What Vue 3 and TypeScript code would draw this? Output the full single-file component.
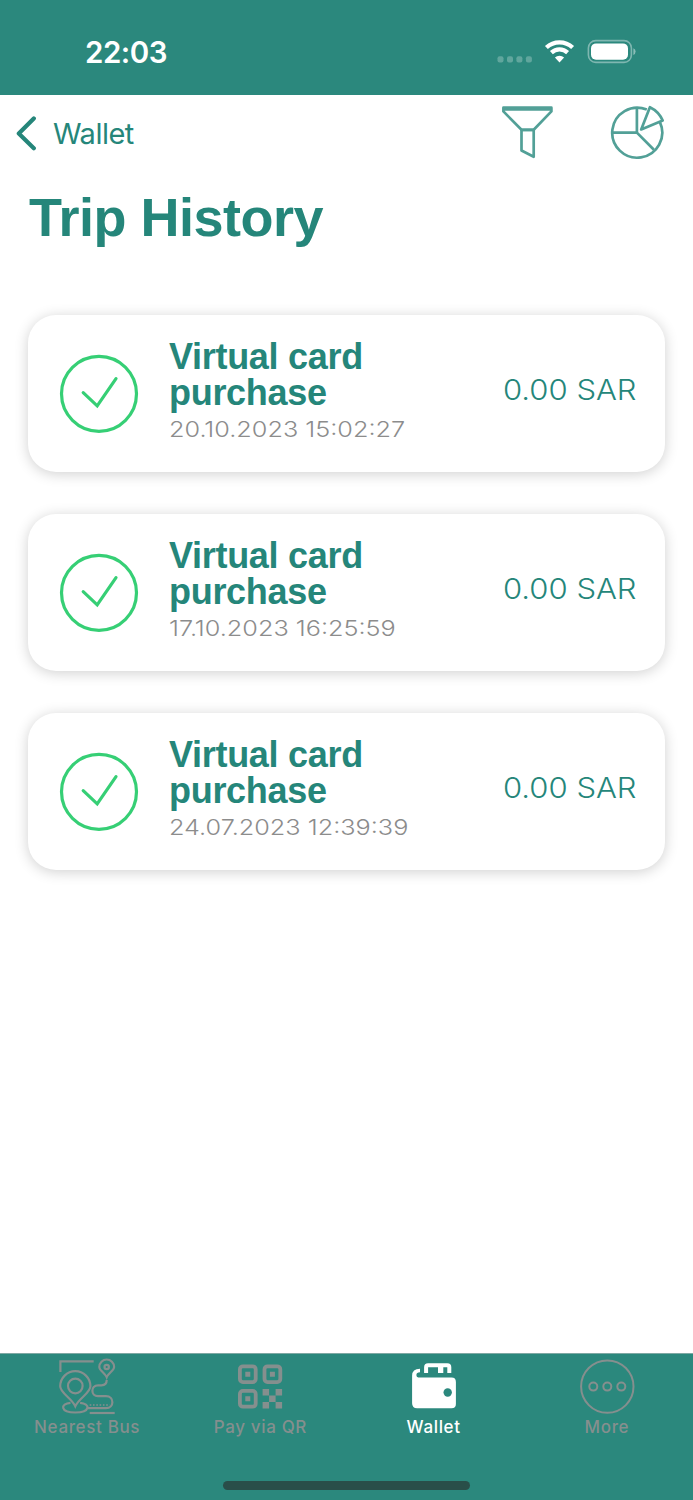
<script setup lang="ts">
interface Trip {
  id: number
  title: string
  date: string
  amount: string
}

const trips: Trip[] = [
  { id: 1, title: 'Virtual card purchase', date: '20.10.2023 15:02:27', amount: '0.00 SAR' },
  { id: 2, title: 'Virtual card purchase', date: '17.10.2023 16:25:59', amount: '0.00 SAR' },
  { id: 3, title: 'Virtual card purchase', date: '24.07.2023 12:39:39', amount: '0.00 SAR' },
]
</script>

<template>
  <div class="screen">
    <header class="status">
      <span class="clock">22:03</span>
      <svg class="signals" width="142" height="30" viewBox="0 0 142 30">
        <g fill="#fff" fill-opacity=".25">
          <rect x="2.5" y="21.3" width="6" height="6.2" rx="2" />
          <rect x="12" y="21.3" width="6" height="6.2" rx="2" />
          <rect x="21.4" y="21.3" width="6" height="6.2" rx="2" />
          <rect x="30.9" y="21.3" width="6" height="6.2" rx="2" />
        </g>
        <g fill="none" stroke="#fff" stroke-width="4.2">
          <path d="M51.4 12.6a19 19 0 0 1 26.2 0" />
          <path d="M56.4 17.6a11.8 11.8 0 0 1 16.2 0" />
        </g>
        <path d="M64.5 27.4l-4.6-4.8a6.7 6.7 0 0 1 9.2 0z" fill="#fff" />
        <rect x="93.4" y="5.6" width="43" height="21.8" rx="7.4" fill="none" stroke="#fff" stroke-opacity=".4" stroke-width="1.6" />
        <rect x="96" y="8.4" width="37" height="16.4" rx="5" fill="#fff" />
        <path d="M138.4 13.2q2.2 1 2.2 3.4t-2.2 3.4z" fill="#fff" fill-opacity=".45" />
      </svg>
    </header>

    <nav class="nav">
      <a class="back">
        <svg width="22" height="36" viewBox="0 0 22 36">
          <path d="M19.8 3.400L4.800 18.600l15 14.600" fill="none" stroke="currentColor" stroke-width="4.200" stroke-linecap="round" stroke-linejoin="round" />
        </svg>
        <span class="back-label">Wallet</span>
      </a>
      <div class="actions">
        <svg width="52" height="56" viewBox="-1 0 52 56" fill="none" stroke="#52a097" stroke-width="2.700" stroke-linejoin="round">
          <path d="M1.400 3.700h48v3.700L31.700 25.800H19.500L1.400 7.400zM2.500 5.400h46" />
          <path d="M19.500 25.800h12.200v27L19.500 46.500z" />
        </svg>
        <svg width="56" height="56" viewBox="1 0 56 56" fill="none" stroke="#52a097" stroke-width="2.700" stroke-linejoin="round">
          <path d="M37.800 5.600a25 25 0 1 0 13.200 12.800" />
          <path d="M27.900 3.500v25.100H2.600M27.900 28.600l17 17.200" />
          <path d="M32.200 25.400l8.700-22.200a26 26 0 0 1 12.800 13.400z" />
        </svg>
      </div>
    </nav>

    <h1 class="title">Trip History</h1>

    <main class="list">
      <article v-for="trip in trips" :key="trip.id" class="card">
        <svg class="check" width="80" height="80" viewBox="0 0 80 80" fill="none" stroke="#36cf75" stroke-width="3.200" stroke-linecap="round">
          <circle cx="40" cy="40.800" r="37.500" />
          <path d="M24.200 39.600l14 13.200L57 25.600" />
        </svg>
        <div class="info">
          <h2 class="name">{{ trip.title }}</h2>
          <time class="date">{{ trip.date }}</time>
        </div>
        <span class="amount">{{ trip.amount }}</span>
      </article>
    </main>

    <footer class="tabs">
      <div class="tab">
        <svg width="60" height="60" viewBox="0 0 60 60" fill="none" stroke="currentColor" stroke-width="2.200">
          <path d="M3.400 14V3.300h33.300" />
          <path d="M18.300 48.300C14.500 40 3.200 35 3.200 28.300a15.100 15.100 0 0 1 30.200 0C33.400 35 22 40 18.300 48.300z" />
          <circle cx="18.300" cy="28" r="7.300" />
          <path d="M13.500 44.800c-10.500 1-10.500 9.700 4.800 9.700s15.300-8.700 4.800-9.700M30 50.200h19c8.500 0 8.500-12 0-12h-8c-7.500 0-7.500-10.900 0-10.900h3.500c3.500 0 5.200-1.500 5.200-5.200" />
          <path d="M49.700 19.200C48 15 42.300 12.500 42.300 8.900a7.400 7.400 0 0 1 14.800 0c0 3.600-5.700 6.100-7.400 10.300z" />
          <circle cx="49.700" cy="9" r="2.200" />
          <path d="M32.700 47h20" stroke-width="1.600" stroke-dasharray="1.600 1.700" />
          <path d="M32.700 55h25" />
        </svg>
        <span class="label">Nearest Bus</span>
      </div>
      <div class="tab">
        <svg width="60" height="60" viewBox="0 0 60 60">
          <g fill="none" stroke="currentColor" stroke-width="3.800">
            <rect x="9.900" y="8.300" width="15.800" height="15.800" rx="3" />
            <rect x="34.500" y="8.300" width="15.800" height="15.800" rx="3" />
            <rect x="9.900" y="32.900" width="15.800" height="15.800" rx="3" />
          </g>
          <g fill="currentColor">
            <path d="M15.300 13.700h5v5h-5zM39.900 13.700h5v5h-5zM15.300 38.300h5v5h-5z" />
            <path d="M32.600 31h6.500v6.500h-6.500zM45.600 31h6.500v6.500h-6.500zM39.100 37.500h6.500v6.500h-6.500zM32.600 44h6.500v6.500h-6.500zM45.600 44h6.500v6.500h-6.500z" />
          </g>
        </svg>
        <span class="label">Pay via QR</span>
      </div>
      <div class="tab active">
        <svg width="60" height="60" viewBox="0 0 60 60" fill="currentColor">
          <path d="M16 10.800v3.400q-3.600 0-3.600 2.700t3.600 2.600h31.500q4.400 0 4.400 4.400v22q0 4.400-4.400 4.400H13.100q-5 0-5-5V17.800q0-7 7.900-7z" />
          <path d="M20.100 15V9.300q0-4 4-4h19.200q4 0 4 4V15h-4V9.300h-4V15h-5.300V9.300H24.100V15z" />
          <circle cx="43.700" cy="34.500" r="4.200" fill="#2b887d" />
        </svg>
        <span class="label">Wallet</span>
      </div>
      <div class="tab">
        <svg width="60" height="60" viewBox="0 0 60 60" fill="none" stroke="currentColor">
          <circle cx="30.300" cy="28.600" r="26.200" stroke-width="2" />
          <g stroke-width="2">
            <circle cx="16.300" cy="28.600" r="4" />
            <circle cx="30.300" cy="28.600" r="4" />
            <circle cx="44.300" cy="28.600" r="4" />
          </g>
        </svg>
        <span class="label">More</span>
      </div>
      <div class="home"></div>
    </footer>
  </div>
</template>

<style>
body {
  background: #fff;
}
</style>

<style scoped>
.screen {
  display: flex;
  flex-direction: column;
  width: 693px;
  height: 1500px;
  overflow: hidden;
  background: #fff;
  color: #25867a;
  font-family: Inter, "Liberation Sans", sans-serif;
}
.status {
  box-sizing: border-box;
  flex: none;
  display: flex;
  justify-content: space-between;
  align-items: flex-start;
  height: 95px;
  padding: 35px 56px 0 85px;
  background: #2b887d;
  color: #fff;
}
.clock {
  font-size: 29.500px;
  font-weight: 600;
  line-height: 34px;
  letter-spacing: -0.5px;
}
.nav {
  display: flex;
  justify-content: space-between;
  height: 86px;
  padding: 0 27px 0 14px;
}
.back {
  display: flex;
  align-items: center;
  gap: 17px;
  height: 76px;
}
.back-label {
  font-size: 29px;
  line-height: 36px;
  letter-spacing: -0.5px;
  padding-top: 1px;
}
.actions {
  display: flex;
  gap: 57px;
  padding-top: 9px;
}
.title {
  margin: 0 0 0 29px;
  padding-top: 6px;
  height: 128px;
  font: bold 54px/60px "Liberation Sans", Arial, sans-serif;
  letter-spacing: -0.5px;
  white-space: nowrap;
}
.list {
  display: flex;
  flex-direction: column;
  flex: 1;
  gap: 42px;
  padding: 0 28px;
}
.card {
  box-sizing: border-box;
  display: flex;
  height: 157px;
  padding: 0 28px 0 31px;
  border-radius: 28px;
  background: #fff;
  box-shadow: 0 2px 14px rgba(0, 0, 0, 0.19);
}
.check {
  flex: none;
  margin: 38px 30px 0 0;
}
.info {
  flex: 1;
  padding-top: 24px;
}
.name {
  width: 240px;
  margin: 0;
  font: bold 36px/35.500px "Liberation Sans", Arial, sans-serif;
  letter-spacing: -0.300px;
}
.date {
  display: block;
  width: max-content;
  margin-top: 5px;
  color: #8c8c8c;
  font-size: 22px;
  font-weight: 300;
  line-height: 28px;
  transform: scaleX(1.147);
  transform-origin: left;
}
.amount {
  margin-top: 57px;
  font-size: 28px;
  font-weight: 300;
  line-height: 36px;
  white-space: nowrap;
  transform: scaleX(1.108);
  transform-origin: right;
}
.tabs {
  box-sizing: border-box;
  flex: none;
  display: grid;
  grid-template-columns: repeat(4, 1fr);
  grid-template-rows: 127px 9px;
  height: 147px;
  border-top: 1px solid #7fa9a4;
  background: #2b887d;
  color: #858f8e;
}
.tab {
  display: flex;
  flex-direction: column;
  align-items: center;
  padding: 4px 0 0 1px;
}
.active {
  color: #fff;
}
.label {
  margin-top: -2px;
  font-size: 17px;
  font-weight: 500;
  line-height: 22px;
  letter-spacing: 0.650px;
}
.home {
  grid-column: 1 / -1;
  justify-self: center;
  width: 247px;
  height: 9px;
  border-radius: 5px;
  background: #294e49;
}
</style>
